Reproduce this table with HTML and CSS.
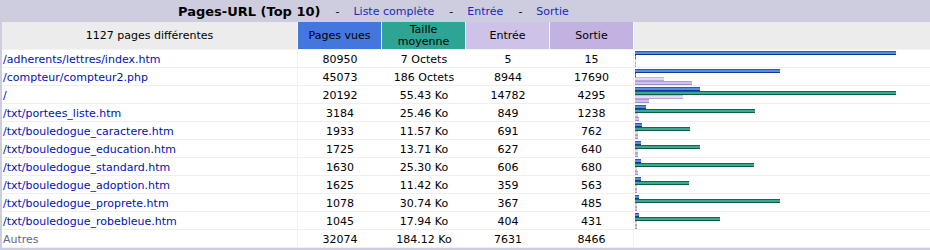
FILE: index.html
```html
<!DOCTYPE html>
<html lang="fr">
<head>
<meta charset="utf-8">
<title>Pages-URL</title>
<link rel="stylesheet" href="styles.css">
</head>
<body>
<div class="box">
  <div class="title">
    <span class="title-main">Pages-URL (Top 10)</span><span class="sep">-</span><a href="#">Liste complète</a><span class="sep">-</span><a href="#">Entrée</a><span class="sep">-</span><a href="#">Sortie</a>
  </div>
  <table class="data">
    <colgroup>
      <col class="c-url"><col class="c-num"><col class="c-num"><col class="c-num"><col class="c-num"><col class="c-graph">
    </colgroup>
    <thead>
      <tr>
        <th class="h-url">1127 pages différentes</th>
        <th class="h-p">Pages vues</th>
        <th class="h-k">Taille<br>moyenne</th>
        <th class="h-e">Entrée</th>
        <th class="h-x">Sortie</th>
        <th class="h-g"></th>
      </tr>
    </thead>
    <tbody>
      <tr><td class="url"><a href="#">/adherents/lettres/index.htm</a></td><td>80950</td><td>7 Octets</td><td>5</td><td class="last">15</td>
        <td class="graph"><div class="bar bp" style="width:261px"></div><div class="bar bk" style="width:1px"></div><div class="bar be" style="width:1px"></div><div class="bar bx" style="width:1px"></div></td></tr>
      <tr><td class="url"><a href="#">/compteur/compteur2.php</a></td><td>45073</td><td>186 Octets</td><td>8944</td><td class="last">17690</td>
        <td class="graph"><div class="bar bp" style="width:145px"></div><div class="bar bk" style="width:1px"></div><div class="bar be" style="width:29px"></div><div class="bar bx" style="width:57px"></div></td></tr>
      <tr><td class="url"><a href="#">/</a></td><td>20192</td><td>55.43 Ko</td><td>14782</td><td class="last">4295</td>
        <td class="graph"><div class="bar bp" style="width:65px"></div><div class="bar bk" style="width:261px"></div><div class="bar be" style="width:48px"></div><div class="bar bx" style="width:14px"></div></td></tr>
      <tr><td class="url"><a href="#">/txt/portees_liste.htm</a></td><td>3184</td><td>25.46 Ko</td><td>849</td><td class="last">1238</td>
        <td class="graph"><div class="bar bp" style="width:11px"></div><div class="bar bk" style="width:120px"></div><div class="bar be" style="width:3px"></div><div class="bar bx" style="width:4px"></div></td></tr>
      <tr><td class="url"><a href="#">/txt/bouledogue_caractere.htm</a></td><td>1933</td><td>11.57 Ko</td><td>691</td><td class="last">762</td>
        <td class="graph"><div class="bar bp" style="width:7px"></div><div class="bar bk" style="width:55px"></div><div class="bar be" style="width:3px"></div><div class="bar bx" style="width:3px"></div></td></tr>
      <tr><td class="url"><a href="#">/txt/bouledogue_education.htm</a></td><td>1725</td><td>13.71 Ko</td><td>627</td><td class="last">640</td>
        <td class="graph"><div class="bar bp" style="width:6px"></div><div class="bar bk" style="width:65px"></div><div class="bar be" style="width:3px"></div><div class="bar bx" style="width:3px"></div></td></tr>
      <tr><td class="url"><a href="#">/txt/bouledogue_standard.htm</a></td><td>1630</td><td>25.30 Ko</td><td>606</td><td class="last">680</td>
        <td class="graph"><div class="bar bp" style="width:6px"></div><div class="bar bk" style="width:119px"></div><div class="bar be" style="width:2px"></div><div class="bar bx" style="width:3px"></div></td></tr>
      <tr><td class="url"><a href="#">/txt/bouledogue_adoption.htm</a></td><td>1625</td><td>11.42 Ko</td><td>359</td><td class="last">563</td>
        <td class="graph"><div class="bar bp" style="width:6px"></div><div class="bar bk" style="width:54px"></div><div class="bar be" style="width:2px"></div><div class="bar bx" style="width:2px"></div></td></tr>
      <tr><td class="url"><a href="#">/txt/bouledogue_proprete.htm</a></td><td>1078</td><td>30.74 Ko</td><td>367</td><td class="last">485</td>
        <td class="graph"><div class="bar bp" style="width:4px"></div><div class="bar bk" style="width:145px"></div><div class="bar be" style="width:2px"></div><div class="bar bx" style="width:2px"></div></td></tr>
      <tr><td class="url"><a href="#">/txt/bouledogue_robebleue.htm</a></td><td>1045</td><td>17.94 Ko</td><td>404</td><td class="last">431</td>
        <td class="graph"><div class="bar bp" style="width:4px"></div><div class="bar bk" style="width:85px"></div><div class="bar be" style="width:2px"></div><div class="bar bx" style="width:2px"></div></td></tr>
      <tr><td class="url other">Autres</td><td>32074</td><td>184.12 Ko</td><td>7631</td><td class="last">8466</td><td class="graph"></td></tr>
    </tbody>
  </table>
</div>
</body>
</html>
```

FILE: styles.css
```css
html, body {
  margin: 0;
  padding: 0;
  background: #ffffff;
}

body {
  font-family: "DejaVu Sans", Verdana, sans-serif;
  font-size: 11px;
  color: #000000;
}

a {
  color: #0011bb;
  text-decoration: none;
}

.box {
  width: 930px;
  background: #cdcddf;
  padding: 0 0 2px 2px;
  box-sizing: border-box;
}

.title {
  height: 22px;
  display: flex;
  align-items: center;
  padding-left: 176px;
  font-size: 11px;
}

.title-main {
  font-size: 13px;
  font-weight: bold;
  color: #000;
}

.title a {
  color: #1a2ab8;
}

.sep {
  margin: 0 14px 0 15px;
  color: #000;
}

.data {
  width: 928px;
  table-layout: fixed;
  border-collapse: separate;
  border-spacing: 0;
  background: #ffffff;
}

.c-url { width: 296px; }
.c-num { width: 84px; }
.c-graph { width: auto; }

.data th {
  height: 28px;
  padding: 1px 0 0;
  box-sizing: border-box;
  font-weight: normal;
  line-height: 12px;
  text-align: center;
  vertical-align: middle;
  border-right: 1px solid #f6f6f6;
  border-bottom: 1px solid #f4f4f4;
}

.h-url { background: #ececec; }
.h-p { background: #4477dd; }
.h-k { background: #2ea495; }
.h-e { background: #cec2e8; }
.h-x { background: #c1b2e2; }
.h-g { background: #ececec; border-right: none !important; }

.data td {
  height: 18px;
  padding: 1px 0 0;
  box-sizing: border-box;
  text-align: center;
  vertical-align: middle;
  line-height: 13px;
  border-bottom: 1px solid #efefef;
  white-space: nowrap;
  overflow: hidden;
}

.data td.url {
  text-align: left;
  padding-left: 1px;
  border-right: 1px solid #f2f2f2;
}

.data td.other {
  color: #666688;
}

.data td.last {
  border-right: 1px solid #f2f2f2;
}

.data td.graph {
  text-align: left;
  vertical-align: top;
  padding: 1px 0 0 1px;
}

.bar {
  height: 4px;
}

.bp {
  background: linear-gradient(#2a58c8 0 1px, #5a8ae6 1px 3px, #12369c 3px);
}

.bk {
  background: linear-gradient(#0e6a48 0 1px, #3aa892 1px 3px, #0c5c40 3px);
}

.be {
  background: linear-gradient(#c4b6e6 0 1px, #e2daf4 1px 3px, #b8a8e0 3px);
}

.bx {
  background: linear-gradient(#ae9adc 0 1px, #cfc2ec 1px 3px, #a08ad4 3px);
}
```
